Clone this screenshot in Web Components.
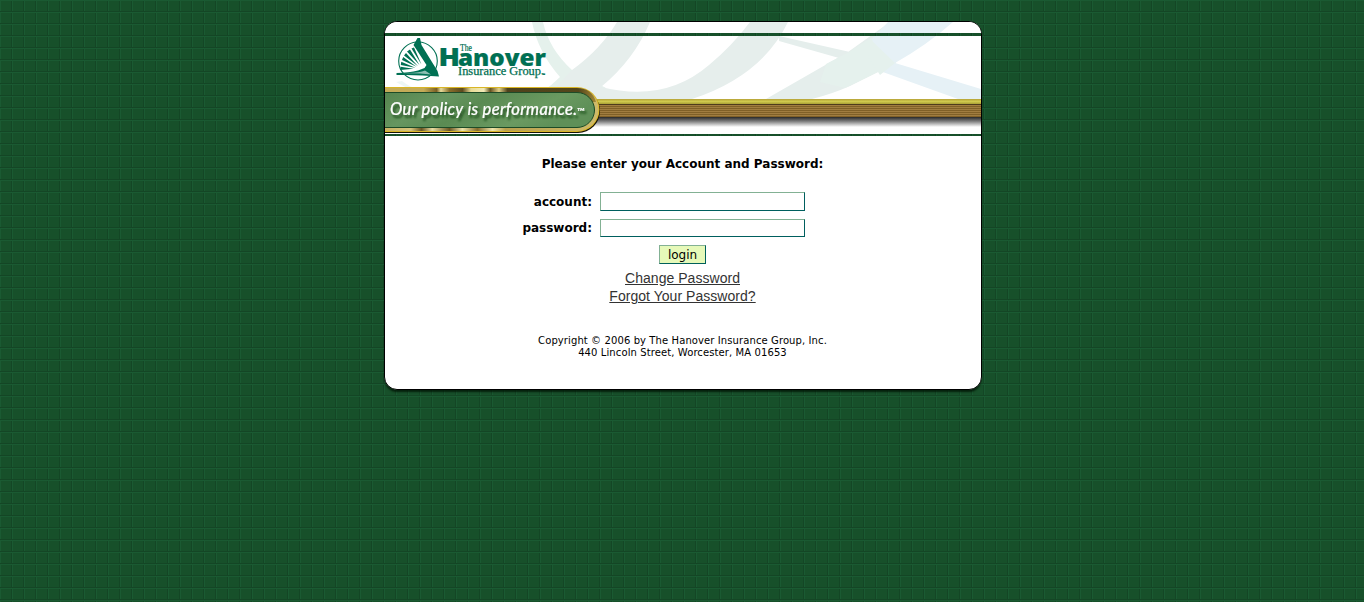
<!DOCTYPE html>
<html lang="en"><head><meta charset="utf-8"><title>Login</title>
<style>
html,body{margin:0;height:100%}
body{background-color:#17502a;overflow:hidden;background-image:linear-gradient(#1a5a32 1px,transparent 1px,transparent 11px,#144625 11px),linear-gradient(90deg,#1a5a32 1px,transparent 1px,transparent 11px,#144625 11px);background-size:12px 12px;font-family:"DejaVu Sans",Verdana,sans-serif;color:#000}
</style></head><body>
<login-page></login-page>
<script>
const define=(name,html)=>customElements.define(name,class extends HTMLElement{
  constructor(){super();this.attachShadow({mode:'open'}).innerHTML=html;}
});

define('brand-banner',`<style>:host{display:block;height:114px}svg{display:block}</style>
<svg width="596" height="114" viewBox="385 22 596 114">
<defs>
<linearGradient id="gold" x1="385" x2="600" gradientUnits="userSpaceOnUse">
<stop offset="0" stop-color="#c4ab58"/><stop offset=".18" stop-color="#c4ab58"/><stop offset=".24" stop-color="#7a6026"/><stop offset=".26" stop-color="#e9dc9c"/><stop offset=".3" stop-color="#8a6e2c"/><stop offset=".36" stop-color="#5d4a1e"/><stop offset=".4" stop-color="#e8db97"/><stop offset=".46" stop-color="#f3ebb8"/><stop offset=".49" stop-color="#675322"/><stop offset=".53" stop-color="#e0d08a"/><stop offset=".57" stop-color="#4f421c"/><stop offset=".9" stop-color="#54461b"/><stop offset="1" stop-color="#b3963c"/></linearGradient>
<linearGradient id="goldb" x1="385" x2="600" gradientUnits="userSpaceOnUse">
<stop offset="0" stop-color="#c9b263"/><stop offset=".12" stop-color="#d6c47c"/><stop offset=".17" stop-color="#6a5522"/><stop offset=".22" stop-color="#e9dda2"/><stop offset=".3" stop-color="#6a5522"/><stop offset=".36" stop-color="#efe5ab"/><stop offset=".43" stop-color="#856c2d"/><stop offset=".5" stop-color="#efe5ab"/><stop offset=".56" stop-color="#b9a04e"/><stop offset="1" stop-color="#cfbb6b"/></linearGradient>
<linearGradient id="pill" x1="0" x2="1" y2=".3"><stop offset="0" stop-color="#56854f"/><stop offset=".3" stop-color="#669660"/><stop offset=".5" stop-color="#5a8b53"/><stop offset=".8" stop-color="#6a9a61"/><stop offset="1" stop-color="#5f9058"/></linearGradient>
<linearGradient id="shade" x1="0" x2="0" y2="1"><stop offset="0" stop-color="#292929"/><stop offset=".4" stop-color="#777"/><stop offset="1" stop-color="#fff"/></linearGradient>
<linearGradient id="bar" x1="0" x2="0" y2="1"><stop offset="0" stop-color="#b6a237"/><stop offset=".5" stop-color="#d0c94d"/><stop offset="1" stop-color="#aaa035"/></linearGradient>
<filter id="ts" x="-10%" y="-30%" width="120%" height="180%"><feDropShadow dx="2" dy="3" stdDeviation="1.2" flood-color="#183b19" flood-opacity=".75"/></filter>
<pattern id="weave" width="12" height="12" patternUnits="userSpaceOnUse"><rect width="12" height="12" fill="#17502a"/><path d="M11 0h1v12h-1z" fill="#144625"/><path d="M0 0h1v12H0z" fill="#1a5a32"/></pattern>
</defs>
<path fill="#fff" d="M385 22h596v114H385z"/>
<path fill="#e5f1ec" d="M532 22h11q6 27 29 48l34 18-50 3h-13q9-6 17-14-22-25-28-55z"/>
<path fill="#e6eeec" d="M617 22h33q-16 38-49 65 64 16 108-22 23-19 41-43h38q-26 54-96 77H590l-35-11 17-18q29-21 45-48z"/>
<path fill="#e5eeec" d="M779 36l71 16-11 6-60-17zM766 99l82-47 42-30h24l-20 45-14 4-30 15q-18 8-38 13z"/>
<path fill="#e5f1ed" d="M826 64l23-12 25-16 22 27-16 8-35 17-25-6z"/>
<path fill="#e6f1f6" d="M888 22h65q-26 23-58 41l86 26v10h-23l-78-28-8-32z"/>
<path fill="#e5f1ed" d="M870 39l25 24-15 12-12-18z"/>
<path fill="#e8f4f3" d="M396 82l6-1q8 6 13 7h-8z" opacity=".8"/>
<path fill="url(#weave)" d="M385 33h596v3H385zM385 134h596v2H385z"/>
<path fill="url(#bar)" d="M585 99h396v5H585z"/><path fill="#4f3b1c" d="M585 104h396v1H585z"/>
<path fill="#a17d40" d="M585 105h396v12H585z"/><path stroke="#806027" d="M585 106.500h396M585 108.500h396M585 110.500h396M585 112.500h396M585 114.500h396M585 116.500h396"/>
<path fill="url(#shade)" d="M585 117h396v10H585z"/>
<path fill="#151307" d="M385 89h193a22 22 0 0 1 0 44H385z"/>
<path fill="#d9b626" d="M385 87h192a22.500 22.500 0 0 1 0 45H385z"/>
<path fill="url(#goldb)" d="M385 88h192a21.500 21.500 0 0 1 0 43H385z"/>
<path fill="url(#gold)" d="M385 88h192q15 0 19 14H385z"/>
<path d="M385 92.500h192a17.500 17.500 0 0 1 0 35H385" fill="url(#pill)" stroke="#1d4b27"/>
<g fill="#fff" font-style="italic" filter="url(#ts)"><text x="390" y="115" font-family="Lato,sans-serif" font-size="16.500" font-weight="400" stroke="#fff" stroke-width=".2" textLength="187">Our policy is performance.</text><text x="577" y="115" font-family="Lato,sans-serif" font-style="normal" font-size="10" font-weight="700" textLength="8" lengthAdjust="spacingAndGlyphs">™</text></g>
<g fill="#007053">
<ellipse cx="418" cy="61" rx="19.300" ry="19" fill="none" stroke="#007053" stroke-width="1.100"/>
<path d="M417.500 38h2.500l1.500 7L437.500 71l1.500 5.500q-20-2-42.500-1.500v-2q13-.2 21.500-2.500l6.500-2.500 2-3L413.500 45z"/>
<path fill="#fff" d="M402 73.300q13-.3 20-1.800l3-1 6 4q-12-1.500-29-1.200z" opacity=".55"/>
<path d="M411.500 48.500l2.500-1 7.500 17zM407 51.500l3-2 9.500 15.500zM404 55.500l2-2.500 12 13.300zM402 60l1.200-3 13.300 9.800zM400.800 65l.5-3.300 14 6zM400.500 70v-3.300l13 2z"/>
<text x="460" y="51" font-family="Liberation Serif,serif" font-size="9.500" textLength="12" lengthAdjust="spacingAndGlyphs" stroke="#007053" stroke-width=".2">The</text>
<g font-family="Open Sans,sans-serif" font-weight="800" stroke="#007053" stroke-width=".2"><text x="438.500" y="66" font-size="24.500" textLength="21.500" lengthAdjust="spacingAndGlyphs">H</text>
<text x="458" y="66" font-size="23.500" textLength="88" lengthAdjust="spacingAndGlyphs">anover</text></g>
<text x="458" y="75" font-family="Liberation Serif,serif" font-size="11.500" textLength="83" lengthAdjust="spacingAndGlyphs" stroke="#007053" stroke-width=".25">Insurance Group</text>
<text x="541" y="76" font-family="Liberation Sans,sans-serif" font-size="4" stroke="#007053" stroke-width=".3">™</text></g>
</svg>`);

define('login-field',`<style>:host{display:grid;grid-template-columns:207px 205px;column-gap:8px;align-items:center;height:19px}
label{text-align:right;font:bold 12px "DejaVu Sans",sans-serif;white-space:nowrap}input{box-sizing:border-box;width:205px;height:100%;margin:0;padding:0 2px;border:1px solid #005f5f;border-top-color:#83b194;border-left-color:#83b194;background:#fff;outline:0}</style>
<label for="i"><slot></slot></label><input id="i">`);

define('login-button',`<style>:host{display:block;width:47px;height:19px}button{box-sizing:border-box;width:100%;height:100%;padding:1px 0 0;border:1px solid #00605a;border-top-color:#83b194;border-left-color:#83b194;background:#e6f9b9;font:12px "DejaVu Sans",sans-serif;color:#000;display:grid;place-items:center;line-height:16px}</style><button><slot></slot></button>`);

define('login-link',`<style>:host{display:block;height:18px;line-height:18px;font-family:"Liberation Sans",Arial,sans-serif;font-size:14px;letter-spacing:.04px}a{color:#333;text-decoration:underline}</style><a href="#"><slot></slot></a>`);

define('login-card',`<style>:host{display:block;box-sizing:border-box;width:598px;height:369px;border:1px solid #000;border-radius:13px;background:#fff;overflow:hidden}</style><slot></slot>`);

define('login-page',`<style>:host{display:flex;justify-content:center;padding:21px 0 0 2px}
.frame{border-radius:13px;box-shadow:0 3px 2px -1px rgba(0,20,5,.8)}
form{display:flex;flex-direction:column;align-items:center;width:595px}
h1{font:bold 12px/16px "DejaVu Sans",sans-serif;margin:20px 0}
.fields{display:grid;row-gap:8px;width:595px}
login-button{margin:8px 0 5px}
footer{margin-top:30px;text-align:center;font-size:10px;line-height:12px;letter-spacing:.1px}
</style><div class="frame"><login-card><brand-banner></brand-banner>
<form><h1>Please enter your Account and Password:</h1><div class="fields"><login-field>account:</login-field><login-field style="height:18px">password:</login-field></div>
<login-button>login</login-button><login-link>Change Password</login-link><login-link>Forgot Your Password?</login-link>
<footer>Copyright © 2006 by The Hanover Insurance Group, Inc.<br>440 Lincoln Street, Worcester, MA 01653</footer></form></login-card></div>`);
</script></body></html>
